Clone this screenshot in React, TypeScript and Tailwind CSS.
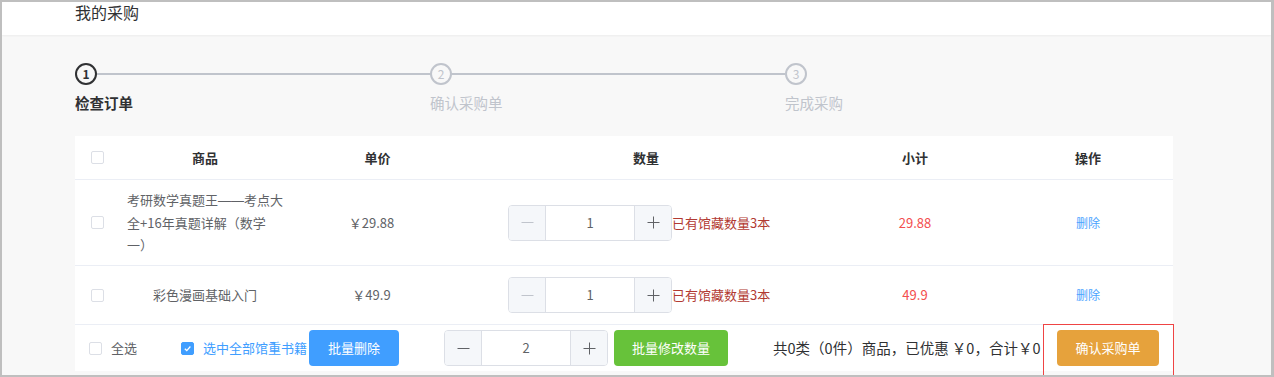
import React from "react";

type Item = {
  id: number;
  title: React.ReactNode[];
  price: string;
  qty: number;
  subtotal: string;
};

const dash = <span className="font-['Liberation_Sans',sans-serif]">——</span>;

const items: Item[] = [
  {
    id: 1,
    title: [
      <>考研数学真题王{dash}考点大</>,
      "全+16年真题详解（数学",
      "一）",
    ],
    price: "￥29.88",
    qty: 1,
    subtotal: "29.88",
  },
  { id: 2, title: ["彩色漫画基础入门"], price: "￥49.9", qty: 1, subtotal: "49.9" },
];

const steps = ["检查订单", "确认采购单", "完成采购"];

function Checkbox({ checked = false }: { checked?: boolean }) {
  return (
    <span
      className={`inline-flex h-[13px] w-[13px] shrink-0 items-center justify-center rounded-[2px] border ${
        checked ? "border-[#409eff] bg-[#409eff]" : "border-[#dcdfe6] bg-white"
      }`}
    >
      {checked && (
        <svg width="9" height="9" viewBox="0 0 10 10" fill="none">
          <path d="M2 5.2 4.2 7.3 8.2 2.8" stroke="white" strokeWidth="1.4" />
        </svg>
      )}
    </span>
  );
}

function NumberInput({ value, min = 1 }: { value: number; min?: number }) {
  const atMin = value <= min;
  return (
    <div className="flex h-[36px] w-[164px] shrink-0 overflow-hidden rounded-[4px] border border-[#dcdfe6] bg-white">
      <span
        className={`flex w-[37px] items-center justify-center border-r border-[#dcdfe6] bg-[#f5f7fa] ${
          atMin ? "text-[#c0c4cc]" : "text-[#606266]"
        }`}
      >
        <svg width="13" height="13" viewBox="0 0 13 13">
          <path d="M0.5 6.5h12" stroke="currentColor" strokeWidth="1" />
        </svg>
      </span>
      <span className="flex flex-1 items-center justify-center text-[13px] text-[#606266]">{value}</span>
      <span className="flex w-[37px] items-center justify-center border-l border-[#dcdfe6] bg-[#f5f7fa] text-[#606266]">
        <svg width="13" height="13" viewBox="0 0 13 13">
          <path d="M0.5 6.5h12M6.5 0.5v12" stroke="currentColor" strokeWidth="1" />
        </svg>
      </span>
    </div>
  );
}

export default function App() {
  return (
    <div className="h-[377px] w-[1274px] overflow-hidden border-2 border-r-[3px] border-[#bfbfbf] bg-[#f8f8f8] font-['Noto_Sans_CJK_SC','Noto_Sans',sans-serif]">
      {/* page header */}
      <div className="h-[33px] bg-white pl-[73px] shadow-[0_1px_2px_rgba(0,0,0,0.05)]">
        <span className="block text-[16px] leading-[20px] text-[#303133]">我的采购</span>
      </div>

      <div className="pl-[73px] pt-[28px]">
        {/* steps */}
        <div className="flex">
          {steps.map((label, i) => {
            const active = i === 0;
            const last = i === steps.length - 1;
            return (
              <div key={label} className={last ? "w-[120px]" : "w-[355px]"}>
                <div className="relative h-[22px]">
                  {!last && <div className="absolute left-0 right-0 top-[10px] h-[2px] bg-[#c0c4cc]" />}
                  <span
                    className={`relative flex h-[22px] w-[22px] items-center justify-center rounded-full border-2 bg-[#f8f8f8] text-[12px] leading-none ${
                      active ? "border-[#303133] font-bold text-[#303133]" : "border-[#c0c4cc] text-[#c0c4cc]"
                    }`}
                  >
                    {i + 1}
                  </span>
                </div>
                <div
                  className={`mt-[6px] text-[14.5px] leading-[24px] ${
                    active ? "font-bold text-[#303133]" : "text-[#c0c4cc]"
                  }`}
                >
                  {label}
                </div>
              </div>
            );
          })}
        </div>

        {/* cart table */}
        <div className="mt-[21px] w-[1098px] bg-white">
          <div className="grid h-[44px] grid-cols-[45px_170px_175px_362px_176px_170px] items-center border-b border-[#ebeef5] text-[13px] font-bold text-[#303133]">
            <div className="flex pl-[16px]">
              <Checkbox />
            </div>
            <div className="text-center">商品</div>
            <div className="text-center">单价</div>
            <div className="text-center">数量</div>
            <div className="text-center">小计</div>
            <div className="text-center">操作</div>
          </div>

          {items.map((item) => (
            <div
              key={item.id}
              className={`grid grid-cols-[45px_170px_175px_362px_176px_170px] items-center border-b border-[#ebeef5] text-[13px] text-[#606266] ${
                item.title.length > 1 ? "h-[86px]" : "h-[59px]"
              }`}
            >
              <div className="flex pl-[16px]">
                <Checkbox />
              </div>
              <div className="text-center">
                <div className="inline-block text-left leading-[22px]">
                  {item.title.map((line, n) => (
                    <div key={n}>{line}</div>
                  ))}
                </div>
              </div>
              <div className="pr-[12px] text-center">{item.price}</div>
              <div className="flex items-center pl-[43px]">
                <NumberInput value={item.qty} />
                <span className="text-[#b23a32]">已有馆藏数量3本</span>
              </div>
              <div className="text-center text-[#f34e4e]">{item.subtotal}</div>
              <div className="text-center text-[12px] text-[#4aa3ff]">删除</div>
            </div>
          ))}

          {/* footer actions */}
          <div className="flex h-[46px] items-center pl-[14px] text-[13px]">
            <Checkbox />
            <span className="ml-[9px] text-[#606266]">全选</span>
            <span className="ml-[44px] flex">
              <Checkbox checked />
            </span>
            <span className="ml-[9px] text-[#409eff]">选中全部馆重书籍</span>
            <button className="ml-[2px] h-[36px] w-[90px] rounded-[4px] bg-[#409eff] text-white">批量删除</button>
            <div className="ml-[45px]">
              <NumberInput value={2} />
            </div>
            <button className="ml-[6px] h-[36px] w-[114px] rounded-[4px] bg-[#67c23a] text-white">批量修改数量</button>
            <span className="ml-[45px] text-[14.5px] text-[#303133]">共0类（0件）商品，已优惠 ￥0，合计￥0</span>
            <div className="relative ml-auto mr-[14px]">
              <div className="pointer-events-none absolute -bottom-[10px] -left-[14px] -right-[15px] -top-[6px] border border-[#ef4444]" />
              <button className="h-[36px] w-[102px] rounded-[4px] bg-[#e6a23c] text-white">确认采购单</button>
            </div>
          </div>
        </div>
      </div>
    </div>
  );
}
